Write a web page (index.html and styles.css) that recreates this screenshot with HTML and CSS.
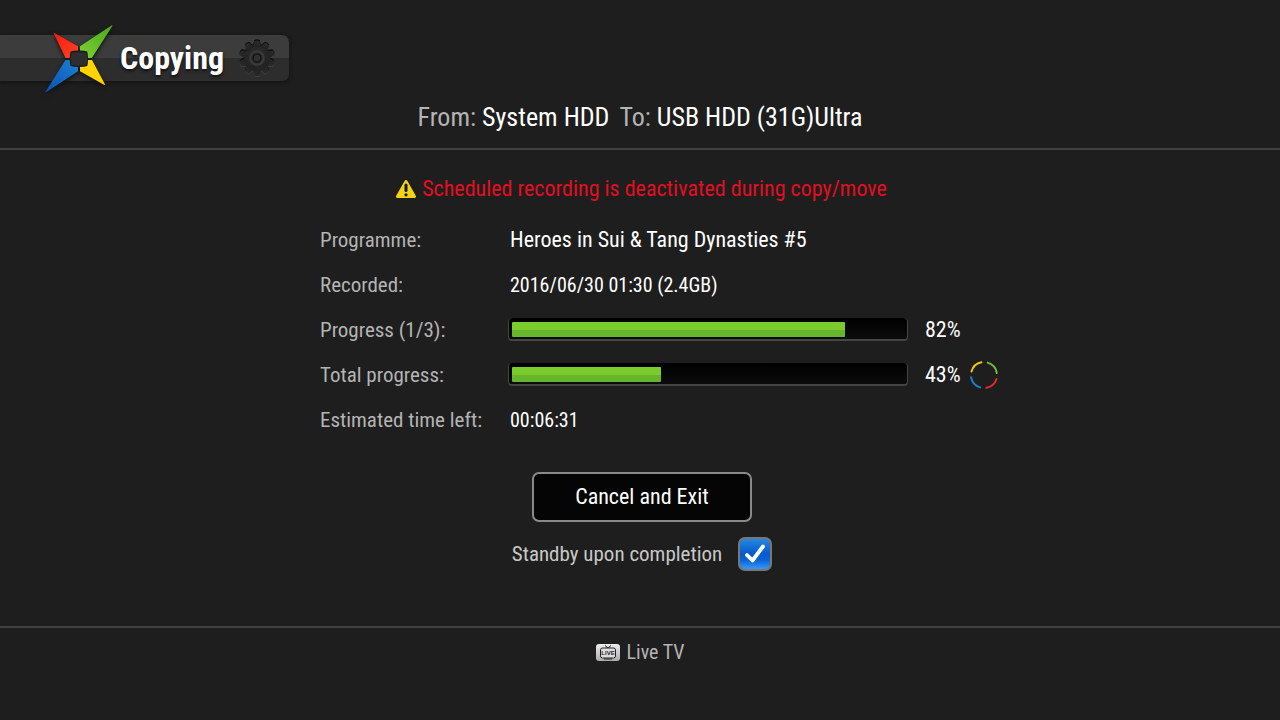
FILE: index.html
```html
<!DOCTYPE html>
<html lang="en">
<head>
<meta charset="utf-8">
<meta name="viewport" content="width=device-width, initial-scale=1">
<title>Copying</title>
<link rel="stylesheet" href="styles.css">
</head>
<body>
<div class="screen">
  <header class="header">
    <div class="title-bar">
      <svg class="logo" viewBox="0 0 90 90" aria-hidden="true">
        <defs>
          <linearGradient id="red" x1="0" y1="0" x2="1" y2="1"><stop offset="0" stop-color="#f9180f"/><stop offset="1" stop-color="#fb4426"/></linearGradient>
          <linearGradient id="green" x1="1" y1="0" x2="0" y2="1"><stop offset="0" stop-color="#48a91a"/><stop offset="1" stop-color="#7fd035"/></linearGradient>
          <linearGradient id="blue" x1="0" y1="1" x2="1" y2="0"><stop offset="0" stop-color="#0c4fb0"/><stop offset="1" stop-color="#1a82d6"/></linearGradient>
        </defs>
        <g transform="translate(0 2)">
          <path fill="#1c1c1c" d="M34 35H54V53H34Z"/>
          <path fill="#2e2e2e" d="M36.5 38Q44 36.5 51.5 38Q53 44 51.5 50Q44 51.5 36.5 50Q35 44 36.5 38Z"/>
          <path fill="url(#red)" d="M18.6 18Q18 17 19.4 18L43 31.3V35.5Q38 35.6 35.6 36.6Q34.8 39 34.7 43H30.5Z"/>
          <path fill="url(#green)" d="M76.5 10.6Q78 9.8 77.2 11.3L56.8 43H53Q53 39 52.2 36.6Q50 35.6 45 35.5V31.3Z"/>
          <path fill="url(#blue)" d="M30.5 45H34.7Q34.8 49 35.6 51Q38 51.8 43 52V56.3L11.4 77Q9.8 78 10.6 76.4Z"/>
          <path fill="#ffd400" d="M45 52Q50 51.8 52.2 51Q53 49 53 45H57L69.8 69Q70.3 70.4 69 69.7L45 56.3Z"/>
        </g>
      </svg>
      <h1 class="title">Copying</h1>
      <svg class="gear" viewBox="0 0 40 40" aria-hidden="true">
        <defs>
          <linearGradient id="gearFill" x1="0" y1="0" x2="0" y2="1"><stop offset="0" stop-color="#2a2a2a"/><stop offset="1" stop-color="#222"/></linearGradient>
          <g id="gearShape">
            <circle cx="20" cy="20" r="13.2"/>
            <path id="tooth" d="M15.5 9Q17 6 17.3 2.8Q20 1.4 22.7 2.8Q23 6 24.5 9Z"/>
            <use href="#tooth" transform="rotate(36 20 20)"/>
            <use href="#tooth" transform="rotate(72 20 20)"/>
            <use href="#tooth" transform="rotate(108 20 20)"/>
            <use href="#tooth" transform="rotate(144 20 20)"/>
            <use href="#tooth" transform="rotate(180 20 20)"/>
            <use href="#tooth" transform="rotate(216 20 20)"/>
            <use href="#tooth" transform="rotate(252 20 20)"/>
            <use href="#tooth" transform="rotate(288 20 20)"/>
            <use href="#tooth" transform="rotate(324 20 20)"/>
          </g>
        </defs>
        <use href="#gearShape" fill="#454545" y="1"/>
        <use href="#gearShape" fill="#0a0a0a" y="-.8"/>
        <use href="#gearShape" fill="url(#gearFill)" y=".3"/>
        <circle cx="20" cy="20" r="6.8" fill="#292929" stroke="#3b3b3b" stroke-width="2"/>
        <circle cx="20" cy="20" r="3.9" fill="#303030" stroke="#161616" stroke-width="1.4"/>
      </svg>
    </div>
    <p class="route"><span><span class="dim">From:</span> System HDD</span><span><span class="dim">To:</span> USB HDD (31G)Ultra</span></p>
  </header>

  <main class="content">
    <p class="warning">
      <svg class="warning-icon" viewBox="0 0 22 20" aria-hidden="true">
        <path d="M11 2.5L19.5 17.5H2.5Z" fill="#f2d415" stroke="#f2d415" stroke-width="3" stroke-linejoin="round"/>
        <path d="M11 6V11.5" stroke="#151515" stroke-width="3" stroke-linecap="round"/>
        <circle cx="11" cy="15.8" r="1.6" fill="#151515"/>
      </svg>
      Scheduled recording is deactivated during copy/move
    </p>

    <dl class="details">
      <dt>Programme:</dt>
      <dd>Heroes in Sui &amp; Tang Dynasties #5</dd>
      <dt>Recorded:</dt>
      <dd class="time">2016/06/30 01:30 (2.4GB)</dd>
      <dt id="current-label">Progress (1/3):</dt>
      <dd>
        <div class="track" role="progressbar" aria-labelledby="current-label" aria-valuenow="82" aria-valuemin="0" aria-valuemax="100"><div class="fill" style="width:85%"></div></div>
        <span>82%</span>
      </dd>
      <dt id="total-label">Total progress:</dt>
      <dd>
        <div class="track" role="progressbar" aria-labelledby="total-label" aria-valuenow="43" aria-valuemin="0" aria-valuemax="100"><div class="fill" style="width:38%"></div></div>
        <span>43%</span>
        <svg class="spinner" viewBox="0 0 28 28" fill="none" stroke-width="2" stroke-linecap="round" aria-hidden="true">
          <path stroke="#efcb12" d="M1.5 10.5A13 13 0 0 1 11.5 1.3"/>
          <path stroke="#79b943" d="M17.7 1.6A13 13 0 0 1 26.8 12"/>
          <path stroke="#e32a2c" d="M26.5 18A13 13 0 0 1 16.4 26.8"/>
          <path stroke="#1c80cc" d="M1 16.2A13 13 0 0 0 10 26.4"/>
        </svg>
      </dd>
      <dt>Estimated time left:</dt>
      <dd class="time">00:06:31</dd>
    </dl>

    <div class="actions">
      <button class="cancel" type="button">Cancel and Exit</button>
      <label class="standby" for="standby">Standby upon completion
        <span class="check">
          <input id="standby" type="checkbox" checked>
          <svg class="tick" viewBox="0 0 34 34" aria-hidden="true"><path d="M9 18L14.5 23.5L25 9.5" fill="none" stroke="#fff" stroke-width="3.8" stroke-linecap="round" stroke-linejoin="round"/></svg>
        </span>
      </label>
    </div>
  </main>

  <footer class="footer">
    <button class="live" type="button">
      <svg class="live-icon" viewBox="0 0 24 17" aria-hidden="true">
        <defs><linearGradient id="plate" x1="0" y1="0" x2="0" y2="1"><stop offset="0" stop-color="#eee"/><stop offset="1" stop-color="#aaa"/></linearGradient></defs>
        <rect width="24" height="17" rx="3" fill="url(#plate)"/>
        <path d="M9 1.5L12 4L15 1.5" fill="none" stroke="#222"/>
        <rect x="4.5" y="4" width="15" height="10" rx="2" fill="#ddd" stroke="#222"/>
        <path d="M8 15H16" stroke="#222"/>
        <text class="live-text" x="12" y="11" text-anchor="middle">LIVE</text>
      </svg>
      Live TV
    </button>
  </footer>
</div>
</body>
</html>
```
FILE: styles.css
```css
* {
  box-sizing: border-box;
}

body {
  margin: 0;
  background: #1e1e1e;
  color: #fff;
  font-family: "Roboto Condensed", "Liberation Sans Narrow", "Liberation Sans", sans-serif;
  font-size: 22px;
  line-height: 28px;
}

h1, p, dl, dd {
  margin: 0;
}

button {
  font: inherit;
  color: inherit;
  cursor: pointer;
}

.screen {
  display: flex;
  flex-direction: column;
  min-height: 100vh;
}

.header {
  display: flex;
  flex-direction: column;
  align-items: flex-start;
  padding: 35px 0 13px;
  border-bottom: 2px solid #414141;
}

.title-bar {
  display: flex;
  align-items: center;
  height: 46px;
  padding: 0 12px 0 35px;
  border-radius: 0 7px 7px 0;
  background: linear-gradient(#3c3c3c 50%, #2d2d2d 50%);
  box-shadow: 0 1px 4px #111;
}

.logo {
  width: 90px;
  height: 90px;
  margin-right: -5px;
  filter: drop-shadow(0 2px 2px #111);
}

.title {
  width: 117px;
  font-size: 32px;
  line-height: 40px;
  font-weight: 700;
  text-shadow: 0 2px 3px #111;
}

.gear {
  width: 40px;
  height: 40px;
}

.route {
  display: flex;
  flex-wrap: wrap;
  justify-content: center;
  gap: 10px;
  align-self: stretch;
  margin-top: 18px;
  font-size: 26px;
  line-height: 36px;
}

.dim {
  color: #b4b4b4;
}

.content {
  display: flex;
  flex-direction: column;
  align-items: center;
  flex: 1;
  padding-top: 25px;
}

.warning {
  display: flex;
  align-items: center;
  gap: 5px;
  padding-left: 2px;
  color: #e20f22;
}

.warning-icon {
  width: 22px;
  height: 20px;
}

.details {
  display: grid;
  grid-template-columns: 190px 490px;
  grid-auto-rows: minmax(45px, auto);
  align-items: center;
  margin-top: 14px;
  padding-left: 40px;
}

.details dt {
  color: #b4b4b4;
  font-size: 21px;
}

.details dd {
  display: flex;
  align-items: center;
}

.details .time {
  font-size: 20px;
}

.track {
  width: 400px;
  height: 23px;
  margin: 0 17px 0 -2px;
  padding: 4px 3px;
  border: solid #454545;
  border-width: 0 1px 2px;
  border-radius: 4px;
  background: linear-gradient(#000, #0c0c0c);
}

.fill {
  height: 15px;
  border-radius: 1px;
  background: linear-gradient(#7ccb2d 50%, #66b52d 50%);
}

.spinner {
  width: 28px;
  height: 28px;
  margin-left: 9px;
}

.actions {
  display: flex;
  flex-direction: column;
  align-items: center;
  gap: 15px;
  margin-top: 30px;
  padding-left: 4px;
}

.cancel {
  min-width: 220px;
  height: 50px;
  border: 2px solid #8a8a8a;
  border-radius: 7px;
  background: #050505;
}

.standby {
  display: flex;
  align-items: center;
  gap: 16px;
  color: #c8c8c8;
  font-size: 21px;
}

.check {
  display: grid;
}

.check input,
.tick {
  grid-area: 1 / 1;
  width: 34px;
  height: 34px;
  margin: 0;
}

.check input {
  appearance: none;
  border: 2px solid #777;
  border-radius: 7px;
  background: linear-gradient(#2587e0, #0759cc 50%, #0864d8 70%, #3998f5);
}

.tick {
  visibility: hidden;
  pointer-events: none;
}

.check input:checked + .tick {
  visibility: visible;
}

.footer {
  display: flex;
  justify-content: center;
  height: 94px;
  padding-top: 9px;
  border-top: 2px solid #414141;
}

.live {
  display: flex;
  align-items: center;
  gap: 7px;
  height: 30px;
  padding: 0;
  border: 0;
  background: none;
  color: #b4b4b4;
  font-size: 20px;
}

.live-icon {
  width: 24px;
  height: 17px;
}

.live-text {
  font-family: "Liberation Sans", sans-serif;
  font-size: 6px;
  font-weight: 700;
  fill: #222;
}
```
